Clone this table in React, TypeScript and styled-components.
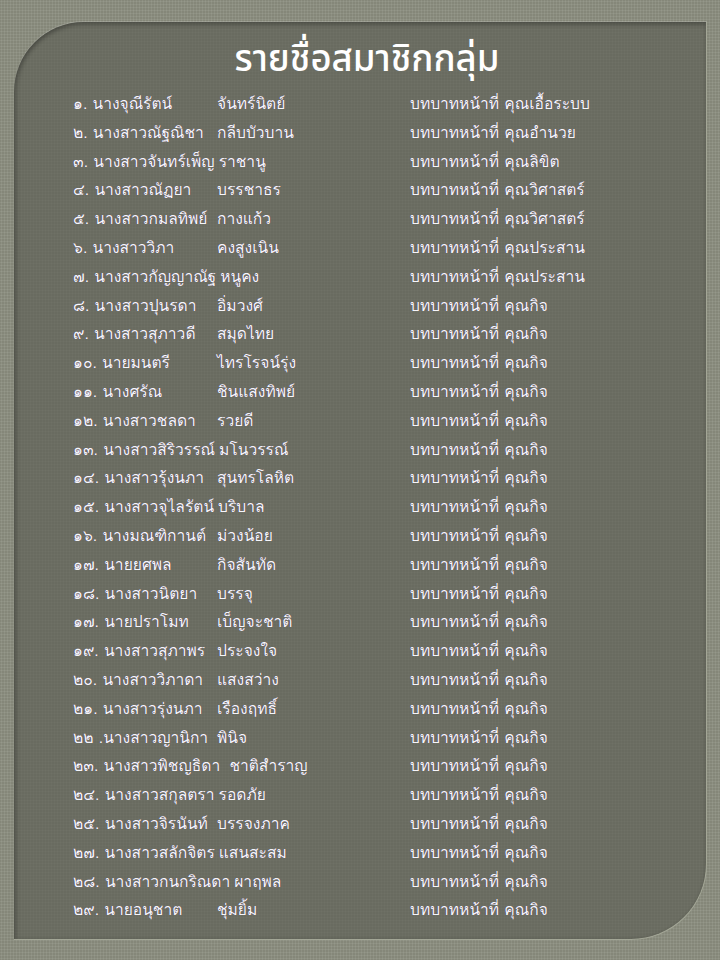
import React from "react";
import styled, { createGlobalStyle } from "styled-components";

const GlobalStyle = createGlobalStyle`
  html, body {
    margin: 0;
    padding: 0;
    width: 720px;
    height: 960px;
    overflow: hidden;
  }
  body {
    font-family: "Loma", "Noto Sans Thai Looped", "Noto Sans", sans-serif;
  }
`;

const Page = styled.div`
  box-sizing: border-box;
  width: 720px;
  height: 960px;
  padding: 22px 13px 20px 14px;
  background-color: #8a8d7e;
  background-image:
    radial-gradient(rgba(255, 255, 255, 0.09) 0.8px, transparent 1.2px),
    radial-gradient(rgba(0, 0, 0, 0.08) 0.8px, transparent 1.2px);
  background-size: 3px 3px, 3px 3px;
  background-position: 0 0, 1.5px 1.5px;
  display: flex;
`;

const Panel = styled.section`
  box-sizing: border-box;
  flex: 1;
  display: flex;
  flex-direction: column;
  background-color: #696b60;
  background-image: radial-gradient(rgba(255, 255, 255, 0.04) 0.8px, transparent 1.2px);
  background-size: 3px 3px;
  border-radius: 70px 0 76px 0;
  border-right: 1px solid #a3a696;
  border-bottom: 1px solid #a3a696;
  box-shadow:
    inset 0 3px 4px rgba(0, 0, 0, 0.22),
    inset 3px 0 4px rgba(0, 0, 0, 0.15),
    0 -1px 0 rgba(255, 255, 255, 0.18);
  padding: 14px 0 0 59px;
`;

const Title = styled.h1`
  margin: 0 0 6px -59px;
  padding-left: 14px;
  text-align: center;
  font-family: "Noto Sans Thai", "Noto Sans", sans-serif;
  font-weight: 500;
  font-size: 36.5px;
  line-height: 48px;
  color: #ffffff;
`;

const List = styled.ol`
  margin: 0;
  padding: 0;
  list-style: none;
  display: flex;
  flex-direction: column;
`;

const Row = styled.li`
  display: flex;
  align-items: baseline;
  height: 28.8px;
  font-size: 15.6px;
  line-height: 28.8px;
  color: #f6f6fb;
  white-space: pre;
  text-shadow: -0.5px 0 0 rgba(40, 40, 120, 0.55), 0.5px 0 0 rgba(120, 40, 20, 0.4);
`;

const NameCell = styled.span`
  flex: 0 0 337px;
  display: flex;
  align-items: baseline;
`;

const GivenName = styled.span`
  display: inline-block;
  min-width: 140px;
`;

const Gap = styled.span`
  display: inline-block;
  width: 4px;
`;

const RoleCell = styled.span`
  flex: 1;
`;

type Member = { given: string; surname: string; role: string };

const members: Member[] = [
  { given: "๑. นางจุณีรัตน์", surname: "จันทร์นิตย์", role: "คุณเอื้อระบบ" },
  { given: "๒. นางสาวณัฐณิชา", surname: "กลีบบัวบาน", role: "คุณอำนวย" },
  { given: "๓. นางสาวจันทร์เพ็ญ", surname: "ราชานู", role: "คุณลิขิต" },
  { given: "๔. นางสาวณัฏยา", surname: "บรรชาธร", role: "คุณวิศาสตร์" },
  { given: "๕. นางสาวกมลทิพย์", surname: "กางแก้ว", role: "คุณวิศาสตร์" },
  { given: "๖. นางสาววิภา", surname: "คงสูงเนิน", role: "คุณประสาน" },
  { given: "๗. นางสาวกัญญาณัฐ", surname: "หนูคง", role: "คุณประสาน" },
  { given: "๘. นางสาวปุนรดา", surname: "อิ่มวงศ์", role: "คุณกิจ" },
  { given: "๙. นางสาวสุภาวดี", surname: "สมุดไทย", role: "คุณกิจ" },
  { given: "๑๐. นายมนตรี", surname: "ไทรโรจน์รุ่ง", role: "คุณกิจ" },
  { given: "๑๑. นางศรัณ", surname: "ชินแสงทิพย์", role: "คุณกิจ" },
  { given: "๑๒. นางสาวชลดา", surname: "รวยดี", role: "คุณกิจ" },
  { given: "๑๓. นางสาวสิริวรรณ์", surname: "มโนวรรณ์", role: "คุณกิจ" },
  { given: "๑๔. นางสาวรุ้งนภา", surname: "สุนทรโลหิต", role: "คุณกิจ" },
  { given: "๑๕. นางสาวจุไลรัตน์", surname: "บริบาล", role: "คุณกิจ" },
  { given: "๑๖. นางมณฑิกานต์", surname: "ม่วงน้อย", role: "คุณกิจ" },
  { given: "๑๗. นายยศพล", surname: "กิจสันทัด", role: "คุณกิจ" },
  { given: "๑๘. นางสาวนิตยา", surname: "บรรจุ", role: "คุณกิจ" },
  { given: "๑๗. นายปราโมท", surname: "เบ็ญจะชาติ", role: "คุณกิจ" },
  { given: "๑๙. นางสาวสุภาพร", surname: "ประจงใจ", role: "คุณกิจ" },
  { given: "๒๐. นางสาววิภาดา", surname: "แสงสว่าง", role: "คุณกิจ" },
  { given: "๒๑. นางสาวรุ่งนภา", surname: "เรืองฤทธิ์", role: "คุณกิจ" },
  { given: "๒๒ .นางสาวญานิกา", surname: "พินิจ", role: "คุณกิจ" },
  { given: "๒๓. นางสาวพิชญธิดา", surname: " ชาติสำราญ", role: "คุณกิจ" },
  { given: "๒๔. นางสาวสกุลตรา", surname: "รอดภัย", role: "คุณกิจ" },
  { given: "๒๕. นางสาวจิรนันท์", surname: "บรรจงภาค", role: "คุณกิจ" },
  { given: "๒๗. นางสาวสลักจิตร", surname: "แสนสะสม", role: "คุณกิจ" },
  { given: "๒๘. นางสาวกนกริณดา", surname: "ผาฤพล", role: "คุณกิจ" },
  { given: "๒๙. นายอนุชาต", surname: "ชุ่มยิ้ม", role: "คุณกิจ" },
];

export default function App() {
  return (
    <>
      <GlobalStyle />
      <Page>
        <Panel>
          <Title>รายชื่อสมาชิกกลุ่ม</Title>
          <List>
            {members.map((m, i) => (
              <Row key={i}>
                <NameCell>
                  <GivenName>{m.given}</GivenName>
                  <Gap />
                  <span>{m.surname}</span>
                </NameCell>
                <RoleCell>บทบาทหน้าที่ {m.role}</RoleCell>
              </Row>
            ))}
          </List>
        </Panel>
      </Page>
    </>
  );
}
